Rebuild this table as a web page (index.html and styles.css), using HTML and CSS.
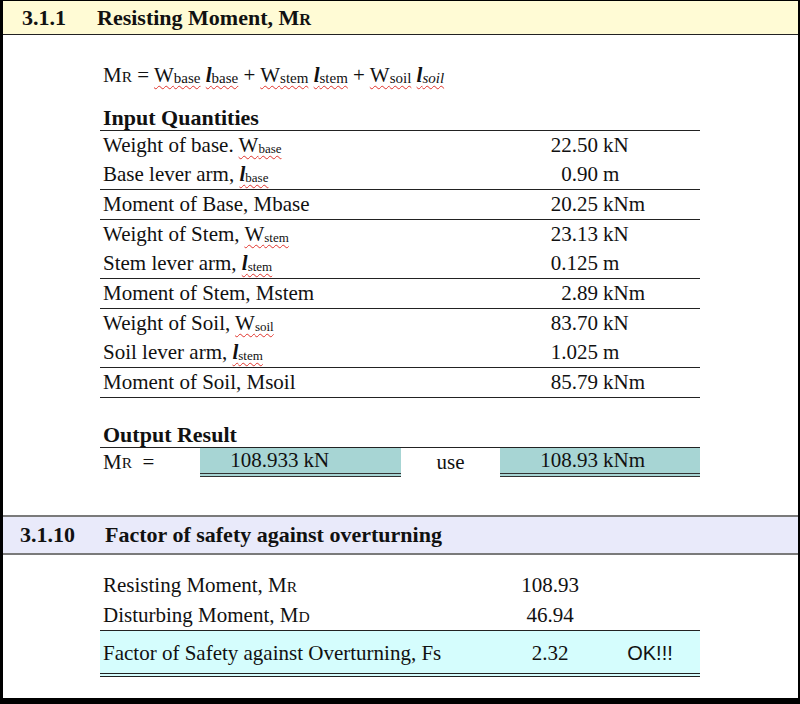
FILE: index.html
```html
<!DOCTYPE html>
<html>
<head>
<meta charset="utf-8">
<title>Resisting Moment</title>
<link rel="stylesheet" href="styles.css">
</head>
<body>
<div class="frame">
  <div class="sec-head sec-yellow">
    <span class="n1">3.1.1</span><span>Resisting Moment, M<span class="sc">R</span></span>
  </div>
  <div class="body1">
    <div class="formula">M<span class="sc">R</span> = <span class="sp">W<sub>base</sub></span> <span class="sp"><i class="ell">l</i><sub>base</sub></span> + <span class="sp">W<sub>stem</sub></span> <span class="sp"><i class="ell">l</i><sub>stem</sub></span> + <span class="sp">W<sub>soil</sub></span> <span class="sp"><i class="ell">l</i><sub><i>soil</i></sub></span></div>
    <div class="qhead">Input Quantities</div>
    <div class="qtable">
      <div class="row"><div class="lab">Weight of base. <span class="sp">W<sub>base</sub></span></div><div class="num">22.50</div><div class="unit">kN</div></div>
      <div class="row end"><div class="lab">Base lever arm, <span class="sp"><i class="ell">l</i><sub>base</sub></span></div><div class="num">0.90</div><div class="unit">m</div></div>
      <div class="row end"><div class="lab">Moment of Base, Mbase</div><div class="num">20.25</div><div class="unit">kNm</div></div>
      <div class="row"><div class="lab">Weight of Stem, <span class="sp">W<sub>stem</sub></span></div><div class="num">23.13</div><div class="unit">kN</div></div>
      <div class="row end"><div class="lab">Stem lever arm, <span class="sp"><i class="ell">l</i><sub>stem</sub></span></div><div class="num">0.125</div><div class="unit">m</div></div>
      <div class="row end"><div class="lab">Moment of Stem, Mstem</div><div class="num">2.89</div><div class="unit">kNm</div></div>
      <div class="row"><div class="lab">Weight of Soil, <span class="sp">W<sub>soil</sub></span></div><div class="num">83.70</div><div class="unit">kN</div></div>
      <div class="row end"><div class="lab">Soil lever arm, <span class="sp"><i class="ell">l</i><sub>stem</sub></span></div><div class="num">1.025</div><div class="unit">m</div></div>
      <div class="row end"><div class="lab">Moment of Soil, Msoil</div><div class="num">85.79</div><div class="unit">kNm</div></div>
    </div>
    <div class="qhead out">Output Result</div>
    <div class="outrow">
      <div class="lab">M<span class="sc">R</span>&nbsp; =</div>
      <div class="teal"><span class="num">108.933</span><span class="unit">kN</span></div>
      <div class="use">use</div>
      <div class="teal"><span class="num">108.93</span><span class="unit">kNm</span></div>
    </div>
  </div>
  <div class="sec-head sec-blue">
    <span class="n2">3.1.10</span><span>Factor of safety against overturning</span>
  </div>
  <div class="body2">
    <div class="frow"><div class="lab">Resisting Moment, M<span class="sc">R</span></div><div class="val">108.93</div><div></div></div>
    <div class="frow end"><div class="lab">Disturbing Moment, M<span class="sc">D</span></div><div class="val">46.94</div><div></div></div>
    <div class="frow fs"><div class="lab">Factor of Safety against Overturning, Fs</div><div class="val">2.32</div><div class="ok">OK!!!</div></div>
  </div>
</div>
</body>
</html>
```

FILE: styles.css
```css
html, body {
  margin: 0;
  padding: 0;
  background: #000;
}

.frame {
  width: 800px;
  height: 704px;
  box-sizing: border-box;
  border-style: solid;
  border-color: #000;
  border-width: 1px 2px 6px 3px;
  background: #fff;
  font-family: "Liberation Serif", "Times New Roman", serif;
  color: #111;
  overflow: hidden;
}

.sec-head {
  display: flex;
  align-items: center;
  font-weight: bold;
  font-size: 22px;
}

.sec-yellow {
  height: 33px;
  background: #fffbd5;
  border-bottom: 1px solid #222;
}

.n1 {
  padding-left: 19px;
  width: 75px;
}

.sec-blue {
  margin-top: 39px;
  height: 36px;
  background: #e9eafa;
  border-top: 2px solid #7a7a7a;
  border-bottom: 2px solid #7a7a7a;
}

.n2 {
  padding-left: 17px;
  width: 85px;
}

.sc {
  font-size: 0.74em;
}

sub {
  font-size: 13px;
  vertical-align: -1px;
  line-height: 0;
}

.ell {
  font-weight: bold;
}

.sp {
  text-decoration: underline wavy #e0332b;
  text-decoration-thickness: 1px;
  text-underline-offset: 3px;
}

.body1 {
  padding-left: 97px;
  width: 600px;
}

.formula {
  margin-top: 28px;
  line-height: 24px;
  font-size: 21px;
  padding-left: 3px;
}

.formula sub {
  font-size: 15px;
}

.qhead {
  font-weight: bold;
  font-size: 22px;
  line-height: 24px;
  margin-top: 17px;
  padding-left: 3px;
  border-bottom: 1px solid #222;
}

.qhead.out {
  margin-top: 25px;
}

.row {
  display: grid;
  grid-template-columns: 400px 98px 102px;
  height: 29px;
  align-items: center;
  font-size: 21px;
}

.row.end {
  border-bottom: 1px solid #222;
}

.lab {
  padding-left: 3px;
  white-space: nowrap;
}

.num {
  text-align: right;
}

.unit {
  padding-left: 5px;
}

.outrow {
  display: grid;
  grid-template-columns: 100px 201px 99px 200px;
  height: 28px;
  align-items: stretch;
  font-size: 21px;
}

.outrow .lab {
  display: flex;
  align-items: center;
}

.teal {
  background: #a7d5d4;
  display: grid;
  grid-template-columns: 1fr 1fr;
  align-items: center;
  border-bottom: 4px double #333;
}

.teal .num {
  padding-right: 2px;
}

.teal .unit {
  padding-left: 3px;
}

.use {
  display: flex;
  align-items: center;
  justify-content: center;
}

.body2 {
  margin-top: 15px;
  padding-left: 97px;
  width: 600px;
}

.frow {
  display: grid;
  grid-template-columns: 400px 100px 100px;
  height: 30px;
  align-items: center;
  font-size: 21px;
}

.frow.end {
  border-bottom: 1px solid #222;
}

.frow.fs {
  background: #d5fdfd;
  border-bottom: 4px double #222;
  padding-top: 3px;
  box-sizing: border-box;
  height: 46px;
}

.val {
  text-align: center;
}

.ok {
  text-align: center;
  font-family: "Liberation Sans", Arial, sans-serif;
  font-size: 20px;
}
```
